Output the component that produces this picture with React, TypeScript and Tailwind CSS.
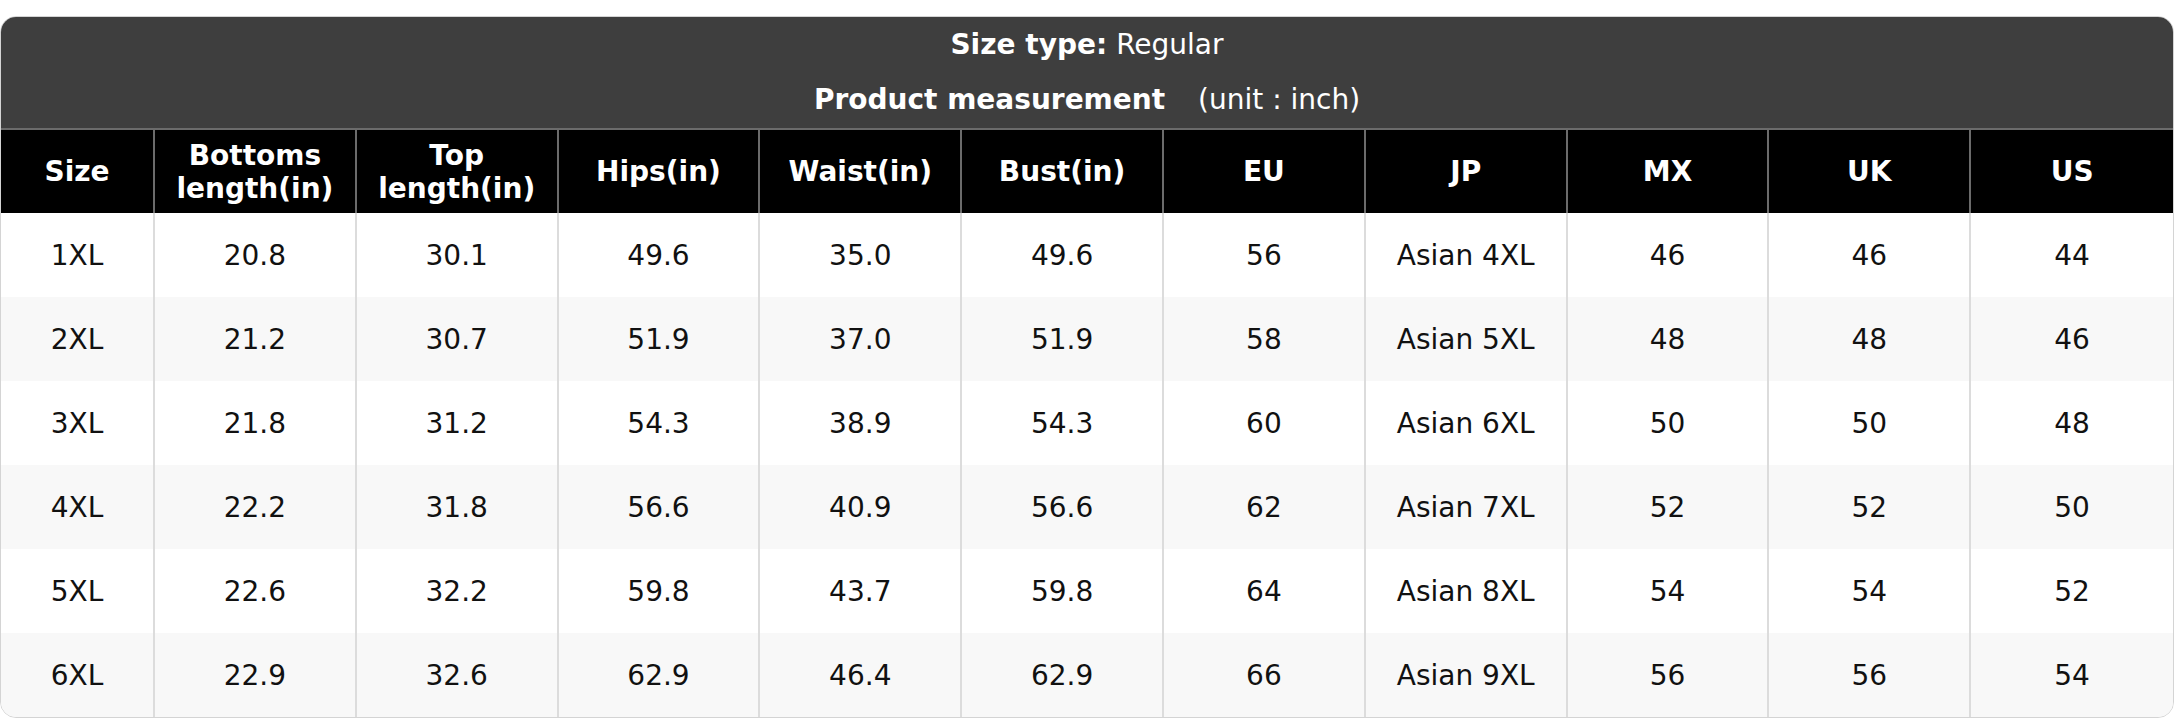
const columns = [
  "Size",
  "Bottoms length(in)",
  "Top length(in)",
  "Hips(in)",
  "Waist(in)",
  "Bust(in)",
  "EU",
  "JP",
  "MX",
  "UK",
  "US",
];

const rows = [
  ["1XL", "20.8", "30.1", "49.6", "35.0", "49.6", "56", "Asian 4XL", "46", "46", "44"],
  ["2XL", "21.2", "30.7", "51.9", "37.0", "51.9", "58", "Asian 5XL", "48", "48", "46"],
  ["3XL", "21.8", "31.2", "54.3", "38.9", "54.3", "60", "Asian 6XL", "50", "50", "48"],
  ["4XL", "22.2", "31.8", "56.6", "40.9", "56.6", "62", "Asian 7XL", "52", "52", "50"],
  ["5XL", "22.6", "32.2", "59.8", "43.7", "59.8", "64", "Asian 8XL", "54", "54", "52"],
  ["6XL", "22.9", "32.6", "62.9", "46.4", "62.9", "66", "Asian 9XL", "56", "56", "54"],
];

export default function App() {
  return (
    <div className="bg-white w-[2174px] h-[720px] pt-4 font-['DejaVu_Sans',sans-serif]">
      <div className="rounded-2xl border border-[#d4d4d4] overflow-hidden">
        {/* Title block */}
        <div className="bg-[#3e3e3e] text-white text-[28px] h-[111px] flex flex-col">
          <div className="h-[55px] flex items-center justify-center">
            <span className="font-bold">Size type:</span>
            <span className="ml-[9px]">Regular</span>
          </div>
          <div className="h-[56px] flex items-center justify-center">
            <span className="font-bold">Product measurement</span>
            <span className="ml-[33px]">(unit : inch)</span>
          </div>
        </div>

        {/* Column headers */}
        <div className="grid grid-cols-[154px_repeat(10,1fr)] bg-black border-t-2 border-[#6b6b6b]">
          {columns.map((c, i) => (
            <div
              key={c}
              className={`h-[83px] pt-px flex items-center justify-center text-center text-white font-bold text-[28px] leading-[1.18] px-2 ${
                i < columns.length - 1 ? "border-r-2 border-[#6b6b6b]" : ""
              }`}
            >
              {c}
            </div>
          ))}
        </div>

        {/* Data rows */}
        {rows.map((r, ri) => (
          <div
            key={r[0]}
            className={`grid grid-cols-[154px_repeat(10,1fr)] ${ri % 2 === 1 ? "bg-[#f8f8f8]" : "bg-white"}`}
          >
            {r.map((v, i) => (
              <div
                key={i}
                className={`h-[84px] pt-px flex items-center justify-center text-[28px] text-[#111] ${
                  i < r.length - 1 ? "border-r-2 border-[#dcdcdc]" : ""
                }`}
              >
                {v}
              </div>
            ))}
          </div>
        ))}
      </div>
    </div>
  );
}
